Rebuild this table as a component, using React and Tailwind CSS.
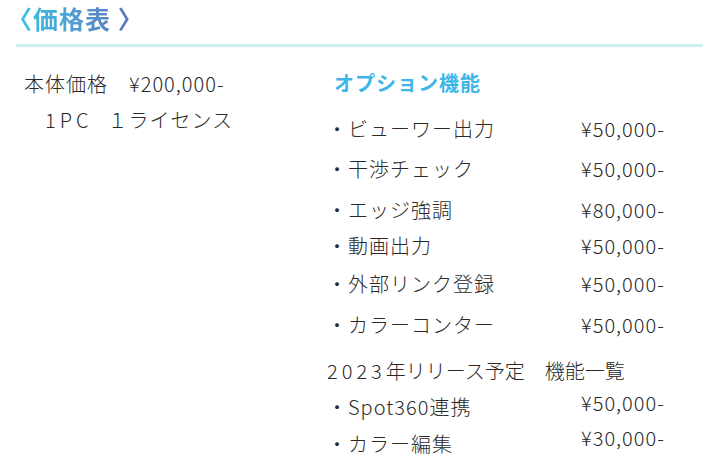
const jp = "font-['Noto_Sans_CJK_JP','Noto_Sans',sans-serif]";

const options = [
  { name: '・ビューワー出力', price: '¥50,000-', mt: 'mt-[16px]' },
  { name: '・干渉チェック', price: '¥50,000-', mt: 'mt-[10px]' },
  { name: '・エッジ強調', price: '¥80,000-', mt: 'mt-[11px]' },
  { name: '・動画出力', price: '¥50,000-', mt: 'mt-[6px]' },
  { name: '・外部リンク登録', price: '¥50,000-', mt: 'mt-[8px]' },
  { name: '・カラーコンター', price: '¥50,000-', mt: 'mt-[11px]' },
];

const upcoming = [
  { name: '・Spot360連携', price: '¥50,000-', mt: 'mt-[6px]', lift: 'mb-[8px]' },
  { name: '・カラー編集', price: '¥30,000-', mt: 'mt-[7px]', lift: 'mb-[12px]' },
];

function PriceRow({ item }) {
  return (
    <div className={`flex h-[30px] items-center ${item.mt}`}>
      <span className="w-[254px] tracking-[1px]">{item.name}</span>
      <span className={`tracking-[1px] ${item.lift || ''}`}>{item.price}</span>
    </div>
  );
}

export default function App() {
  return (
    <div className={`w-[727px] h-[468px] bg-white text-[#2a2a2a] ${jp} overflow-hidden`}>
      {/* Title */}
      <div className="pl-[7px] pt-[1px] h-[44px]">
        <h1 className="inline-block text-[25px] font-bold leading-[34px] tracking-[1px] bg-linear-to-r from-[#1fcdea] to-[#5b69b7] bg-clip-text text-transparent">
          〈価格表 〉
        </h1>
      </div>
      <div className="ml-[16px] w-[687px] h-[3px] bg-[#cdeef1]" />

      <div className="flex text-[20px] font-light leading-none">
        {/* Base price */}
        <div className="w-[327px] pl-[24px] pt-[22px] tracking-[1px]">
          <div className="flex h-[30px] items-center">本体価格　¥200,000-</div>
          <div className="flex h-[30px] items-center mt-[6px] pl-[21px]">
            <span className="tracking-[4px]">1PC</span>
            <span className="pl-[15px]">１ライセンス</span>
          </div>
        </div>

        {/* Options */}
        <div className="pt-[21px]">
          <div className="flex h-[30px] items-center pl-[7px] font-bold text-[#3db6ea] tracking-[1px]">
            オプション機能
          </div>
          {options.map((o) => (
            <PriceRow key={o.name} item={o} />
          ))}
          <div className="flex h-[30px] items-center mt-[16px] tracking-[0px]">
            <span className="tracking-[4px]">2023</span>
            <span>年リリース予定</span>
            <span className="pl-[20px]">機能一覧</span>
          </div>
          {upcoming.map((o) => (
            <PriceRow key={o.name} item={o} />
          ))}
        </div>
      </div>
    </div>
  );
}
